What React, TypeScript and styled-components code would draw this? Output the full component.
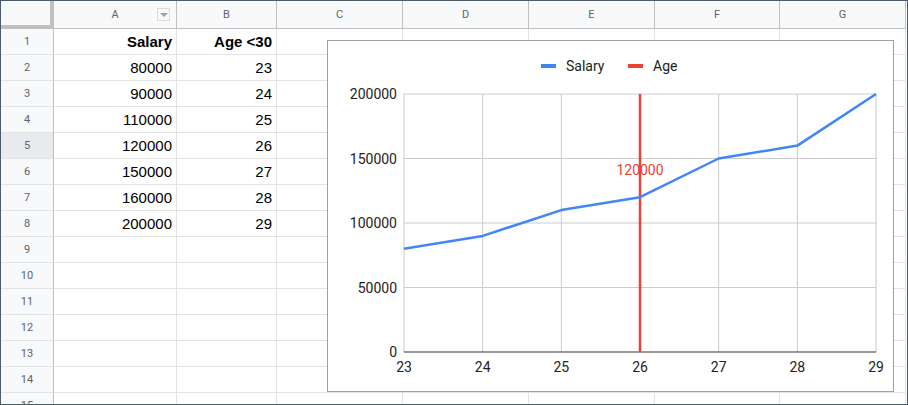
import React from "react";
import styled, { createGlobalStyle } from "styled-components";

const G = createGlobalStyle`
  body { margin: 0; font-family: Roboto, Arial, sans-serif; background: #fff; }
`;

const Frame = styled.div`
  position: relative;
  width: 908px; height: 405px; box-sizing: border-box;
  border: 1px solid #4c5b6b; overflow: hidden;
`;
const Grid = styled.div`
  display: grid;
  grid-template-columns: 53px 123px 100px 126px 126px 126px 125px 126px;
  grid-auto-rows: 26px;
  grid-template-rows: 28px;
`;
const Corner = styled.div`
  background: #f8f9fa;
  border-right: 4px solid #c0c0c0; border-bottom: 4px solid #c0c0c0;
  box-sizing: border-box;
`;
const ColHead = styled.div`
  background: #f8f9fa; color: #5f6368; font-size: 11px;
  display: flex; align-items: center; justify-content: center; position: relative;
  border-right: 1px solid #c0c0c0; border-bottom: 1px solid #c0c0c0; box-sizing: border-box;
`;
const Filter = styled.span`
  position: absolute; right: 6px; top: 7px; width: 13px; height: 13px;
  border: 1px solid #dadce0; box-sizing: border-box;
  display: flex; align-items: center; justify-content: center;
  &::after { content: ""; border-left: 4px solid transparent; border-right: 4px solid transparent; border-top: 4px solid #9aa0a6; }
`;
const RowHead = styled.div<{ $sel?: boolean }>`
  background: ${p => (p.$sel ? "#e8eaed" : "#f8f9fa")}; color: #5f6368; font-size: 11px;
  display: flex; align-items: center; justify-content: center;
  border-right: 1px solid #c0c0c0; border-bottom: 1px solid #e2e3e3; box-sizing: border-box;
`;
const Cell = styled.div<{ $bold?: boolean }>`
  font-family: Arial, "Liberation Sans", sans-serif; font-size: 15px;
  font-weight: ${p => (p.$bold ? 700 : 400)}; color: #000;
  display: flex; align-items: center; justify-content: flex-end; padding-right: 4px;
  border-right: 1px solid #e2e3e3; border-bottom: 1px solid #e2e3e3; box-sizing: border-box;
`;
const Chart = styled.div`
  position: absolute; left: 326px; top: 39px; width: 567px; height: 352px;
  border: 1px solid #9e9e9e; background: #fff; box-sizing: border-box;
`;

const data: [string, string][] = [
  ["Salary", "Age <30"], ["80000", "23"], ["90000", "24"], ["110000", "25"],
  ["120000", "26"], ["150000", "27"], ["160000", "28"], ["200000", "29"],
];
const sal = [80000, 90000, 110000, 120000, 150000, 160000, 200000];
const x0 = 76, dx = 78.67, yT = 53, yB = 311;
const X = (i: number) => x0 + i * dx;
const Y = (v: number) => yB - (v / 200000) * (yB - yT);

export default function App() {
  const rows = [];
  for (let r = 1; r <= 15; r++) {
    const d = data[r - 1];
    rows.push(<RowHead key={"h" + r} $sel={r === 5}>{r}</RowHead>);
    rows.push(<Cell key={"a" + r} $bold={r === 1}>{d ? d[0] : ""}</Cell>);
    rows.push(<Cell key={"b" + r} $bold={r === 1}>{d ? d[1] : ""}</Cell>);
    for (let c = 0; c < 5; c++) rows.push(<Cell key={r + "c" + c} />);
  }
  const font = { fontFamily: "Roboto, Arial, sans-serif", fontSize: 14 };
  return (
    <Frame>
      <G />
      <Grid>
        <Corner />
        <ColHead>A<Filter /></ColHead>
        {["B", "C", "D", "E", "F", "G"].map(c => <ColHead key={c}>{c}</ColHead>)}
        {rows}
      </Grid>
      <Chart>
        <svg width="565" height="350" style={font}>
          <rect x="213" y="23" width="15" height="4" fill="#4285f4" />
          <text x="238" y="30" fill="#222">Salary</text>
          <rect x="300" y="23" width="15" height="4" fill="#ea4335" />
          <text x="325" y="30" fill="#222">Age</text>
          {[0, 1, 2, 3, 4, 5, 6].map(i => (
            <line key={i} x1={X(i)} x2={X(i)} y1={yT} y2={yB} stroke="#cccccc" />
          ))}
          {[50000, 100000, 150000, 200000].map(v => (
            <line key={v} x1={x0} x2={X(6)} y1={Y(v)} y2={Y(v)} stroke="#cccccc" />
          ))}
          <line x1={x0} x2={X(6)} y1={yB} y2={yB} stroke="#333" />
          {[0, 50000, 100000, 150000, 200000].map(v => (
            <text key={v} x="69" y={Y(v) + 5} textAnchor="end" fill="#222">{v}</text>
          ))}
          {[23, 24, 25, 26, 27, 28, 29].map((a, i) => (
            <text key={a} x={X(i)} y="331" textAnchor="middle" fill="#222">{a}</text>
          ))}
          <line x1={X(3)} x2={X(3)} y1={yT} y2={yB} stroke="#ea4335" strokeWidth="2.5" />
          <text x={X(3)} y="134" textAnchor="middle" fill="#ea4335">120000</text>
          <polyline fill="none" stroke="#4285f4" strokeWidth="2.5" strokeLinejoin="round"
            points={sal.map((v, i) => `${X(i)},${Y(v)}`).join(" ")} />
        </svg>
      </Chart>
    </Frame>
  );
}
